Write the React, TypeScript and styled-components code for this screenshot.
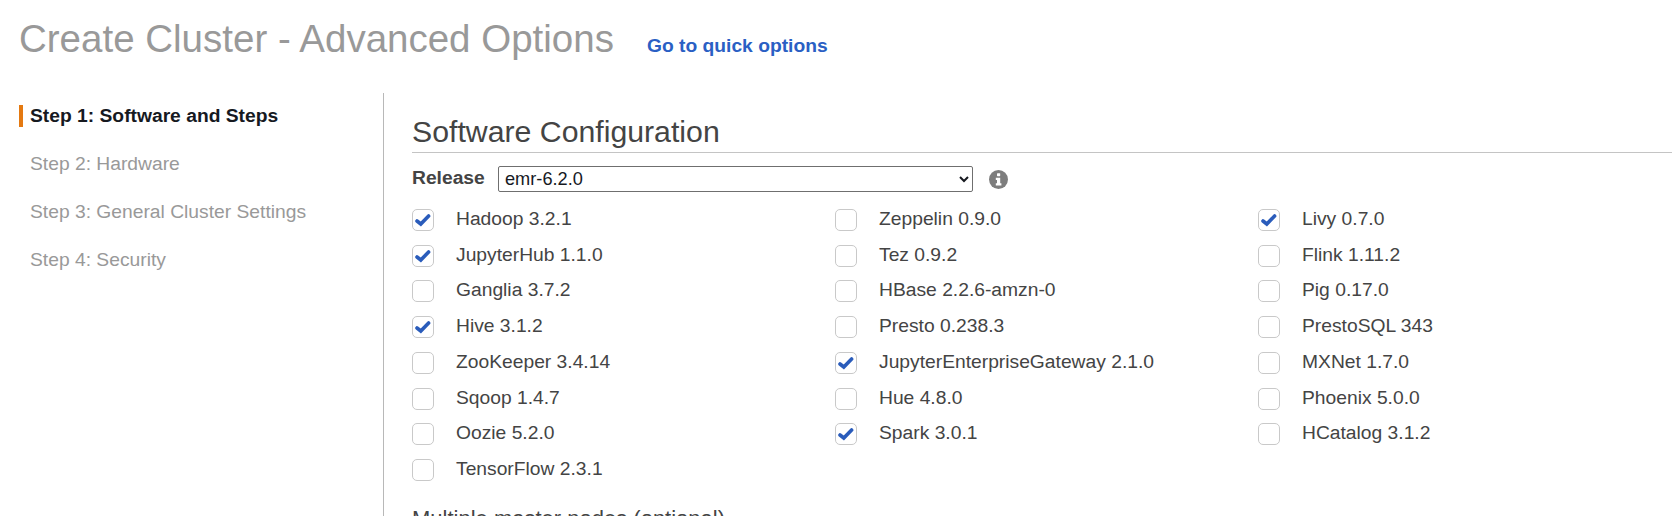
import React from 'react';
import styled, { createGlobalStyle } from 'styled-components';

const GlobalStyle = createGlobalStyle`
  html, body {
    margin: 0;
    height: 516px;
    overflow: hidden;
    background: #fff;
    font-family: "Liberation Sans", Arial, sans-serif;
  }
`;

const Page = styled.div`
  width: 1672px;
  height: 516px;
  overflow: hidden;
`;

const Header = styled.header`
  display: flex;
  align-items: baseline;
  height: 93px;
  padding: 13px 0 0 19px;
  box-sizing: border-box;
`;

const Title = styled.h1`
  margin: 0;
  font-size: 38.5px;
  line-height: 52px;
  font-weight: 400;
  color: #999;
`;

const QuickLink = styled.a`
  margin-left: 33px;
  font-size: 19.25px;
  font-weight: 700;
  color: #2a5fc4;
`;

const Body = styled.div`
  display: flex;
`;

const Sidebar = styled.nav`
  width: 384px;
  flex: none;
  box-sizing: border-box;
  padding: 12px 0 0 19px;
  border-right: 1px solid #b8b8b8;
  height: 423px;
`;

const StepItem = styled.div<{ $active?: boolean }>`
  height: 22px;
  line-height: 22px;
  margin-bottom: 26px;
  padding-left: ${p => (p.$active ? '7px' : '11px')};
  border-left: ${p => (p.$active ? '4px solid #e47911' : 'none')};
  font-size: 19.25px;
  font-weight: ${p => (p.$active ? 700 : 400)};
  color: ${p => (p.$active ? '#16191f' : '#999')};
`;

const Main = styled.main`
  flex: 1;
  padding: 21px 0 0 28px;
`;

const SectionTitle = styled.h2`
  margin: 0;
  height: 38px;
  line-height: 36px;
  font-size: 30.25px;
  font-weight: 400;
  color: #444;
  border-bottom: 1px solid #c4c4c4;
`;

const ReleaseRow = styled.div`
  display: flex;
  align-items: center;
  margin-top: 13px;
  height: 26px;
`;

const ReleaseLabel = styled.label`
  width: 86px;
  margin-bottom: 2px;
  font-size: 19.25px;
  font-weight: 700;
  color: #444;
`;

const ReleaseSelect = styled.select`
  width: 475px;
  height: 26px;
  box-sizing: border-box;
  padding: 0 0 0 2px;
  font-family: inherit;
  font-size: 18.2px;
  color: #16191f;
  background: #fff;
  border: 1px solid #6f6f6f;
  border-radius: 2px;
`;

const InfoIcon = styled.svg`
  margin-left: 16px;
  width: 19px;
  height: 19px;
`;

const Grid = styled.div`
  display: grid;
  grid-template-columns: repeat(3, 423px);
  grid-auto-rows: 35.75px;
  margin-top: 10px;
`;

const AppRow = styled.div`
  display: flex;
  align-items: center;
`;

const Box = styled.span`
  display: flex;
  align-items: center;
  justify-content: center;
  width: 22px;
  height: 22px;
  box-sizing: border-box;
  flex: none;
  border: 1px solid #c9c9c9;
  border-radius: 5px;
  background: #fff;
`;

const AppLabel = styled.span`
  margin: 0 0 2px 22px;
  font-size: 19.25px;
  color: #444;
`;

const SubTitle = styled.h3`
  margin: 18px 0 0;
  font-size: 22px;
  line-height: 26px;
  font-weight: 400;
  color: #444;
`;

const apps: [string, boolean][] = [
  ['Hadoop 3.2.1', true], ['Zeppelin 0.9.0', false], ['Livy 0.7.0', true],
  ['JupyterHub 1.1.0', true], ['Tez 0.9.2', false], ['Flink 1.11.2', false],
  ['Ganglia 3.7.2', false], ['HBase 2.2.6-amzn-0', false], ['Pig 0.17.0', false],
  ['Hive 3.1.2', true], ['Presto 0.238.3', false], ['PrestoSQL 343', false],
  ['ZooKeeper 3.4.14', false], ['JupyterEnterpriseGateway 2.1.0', true], ['MXNet 1.7.0', false],
  ['Sqoop 1.4.7', false], ['Hue 4.8.0', false], ['Phoenix 5.0.0', false],
  ['Oozie 5.2.0', false], ['Spark 3.0.1', true], ['HCatalog 3.1.2', false],
  ['TensorFlow 2.3.1', false]
];

const steps = ['Step 1: Software and Steps', 'Step 2: Hardware', 'Step 3: General Cluster Settings', 'Step 4: Security'];

function Tick () {
  return (
    <svg width='16' height='14' viewBox='0 0 16 14'>
      <path d='M2 8 L5.8 11 L13.6 3' fill='none' stroke='#2a5cbb' strokeWidth='3.6' strokeLinecap='round' />
    </svg>
  );
}

export default function App () {
  return (
    <Page>
      <GlobalStyle />
      <Header>
        <Title>Create Cluster - Advanced Options</Title>
        <QuickLink>Go to quick options</QuickLink>
      </Header>
      <Body>
        <Sidebar>
          {steps.map((step, i) => <StepItem key={step} $active={i === 0}>{step}</StepItem>)}
        </Sidebar>
        <Main>
          <SectionTitle>Software Configuration</SectionTitle>
          <ReleaseRow>
            <ReleaseLabel>Release</ReleaseLabel>
            <ReleaseSelect defaultValue='emr-6.2.0'>
              <option>emr-6.2.0</option>
            </ReleaseSelect>
            <InfoIcon viewBox='0 0 19 19'>
              <circle cx='9.5' cy='9.5' r='9.5' fill='#7d7d7d' />
              <rect x='8' y='3.2' width='3.2' height='3' rx='0.6' fill='#fff' />
              <path d='M6.8 7.8 H11.2 V13.2 H12.4 V15.4 H6.8 V13.2 H8 V10 H6.8 Z' fill='#fff' />
            </InfoIcon>
          </ReleaseRow>
          <Grid>
            {apps.map(([name, checked]) => (
              <AppRow key={name}>
                <Box>{checked && <Tick />}</Box>
                <AppLabel>{name}</AppLabel>
              </AppRow>
            ))}
          </Grid>
          <SubTitle>Multiple master nodes (optional)</SubTitle>
        </Main>
      </Body>
    </Page>
  );
}
